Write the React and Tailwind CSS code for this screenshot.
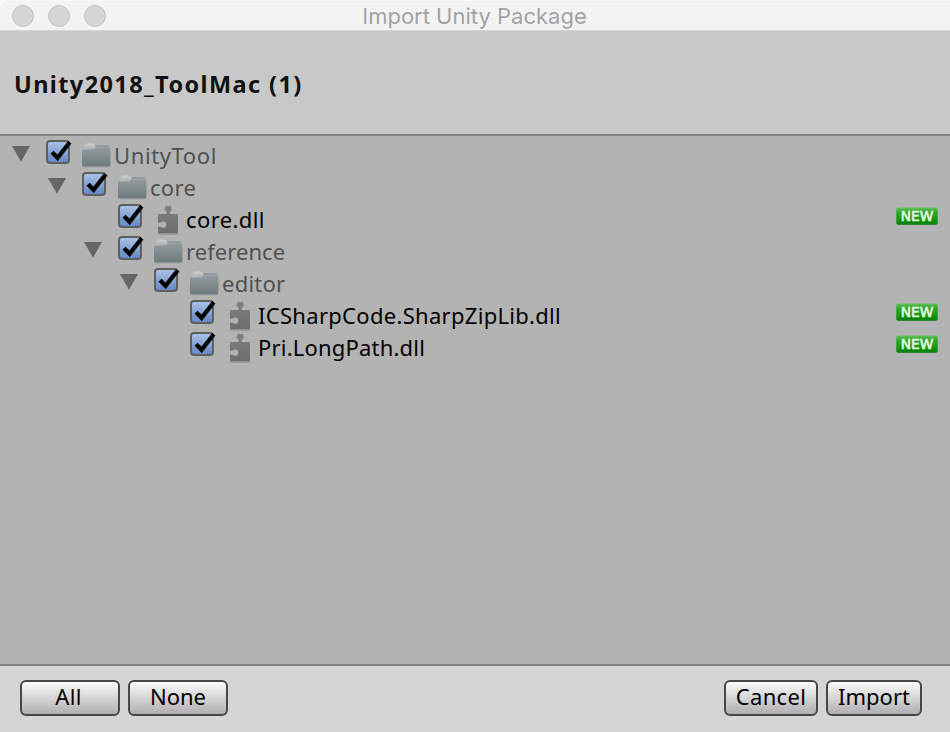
const rows = [
  { name: "UnityTool", indent: "pl-3", kind: "folder", text: "tracking-[0.6px]" },
  { name: "core", indent: "pl-12", kind: "folder", text: "tracking-[0.3px]" },
  { name: "core.dll", indent: "pl-[120px]", kind: "plugin", text: "tracking-[0.4px]" },
  { name: "reference", indent: "pl-[84px]", kind: "folder", text: "tracking-[0.05px]" },
  { name: "editor", indent: "pl-[120px]", kind: "folder", text: "tracking-[0.25px]" },
  { name: "ICSharpCode.SharpZipLib.dll", indent: "pl-48", kind: "plugin", text: "tracking-[0.3px]" },
  { name: "Pri.LongPath.dll", indent: "pl-48", kind: "plugin", text: "tracking-[0.2px]" },
];

function Triangle() {
  return (
    <svg className="block" width="18" height="16" viewBox="0 0 18 16">
      <path d="M0 0H18L9 15.7Z" fill="#666" />
    </svg>
  );
}

function Checkbox() {
  return (
    <svg className="block shrink-0" width="28" height="28" viewBox="0 0 28 28">
      <defs>
        <linearGradient id="checkFill" x1="0" y1="0" x2="0" y2="1">
          <stop offset="0" stopColor="#abc4e6" />
          <stop offset="1" stopColor="#6184c2" />
        </linearGradient>
      </defs>
      <rect x="1" y="1" width="22" height="22" rx="3" fill="url(#checkFill)" stroke="#5f5f5f" strokeWidth="2" />
      <path d="M6 12.200L11.600 17.800L23.800 2.200" fill="none" stroke="#000" strokeWidth="4.200" />
    </svg>
  );
}

function Folder() {
  return (
    <svg className="block" width="30" height="26" viewBox="0.6 0.6 30 26">
      <defs>
        <linearGradient id="folderFill" x1="0" y1="0" x2="0" y2="1">
          <stop offset="0" stopColor="#919b9d" />
          <stop offset="1" stopColor="#6f7a7d" />
        </linearGradient>
        <linearGradient id="tabFill" gradientUnits="userSpaceOnUse" x1="0" y1="1" x2="0" y2="8">
          <stop offset="0" stopColor="#cbcbcb" />
          <stop offset="1" stopColor="#a9acac" />
        </linearGradient>
      </defs>
      <path d="M14 2.600H26.800Q27.800 2.600 27.900 3.600L28.200 8H13Z" fill="#8f999b" />
      <path d="M13.800 2.800H27" stroke="#a0a6a7" strokeWidth="0.600" />
      <path d="M0.800 9V6.500Q0.800 5 2 4L4 2Q4.800 1.200 5.800 1.200H11.300Q12.300 1.200 12.900 2L14.200 4V8Z" fill="url(#tabFill)" />
      <path d="M0.600 8.200Q0.600 7 1.700 7H11Q12 7 12.800 6.200Q14 5 15 5H27.700Q29 5 29 6.500V22.700Q29 24.200 27.500 24.200H2.100Q0.600 24.200 0.600 22.700Z" fill="url(#folderFill)" />
      <path d="M1 7H11Q12 7 12.800 6.200Q14 5 15 5H28.300" fill="none" stroke="#a4adae" strokeWidth="0.700" />
      <path d="M1.500 24.700H28" stroke="#959999" strokeWidth="0.800" />
    </svg>
  );
}

function Plugin() {
  return (
    <svg className="block" width="22" height="30" viewBox="0 0 22 30">
      <defs>
        <linearGradient id="pluginFill" x1="0" y1="0" x2="0" y2="1">
          <stop offset="0" stopColor="#808080" />
          <stop offset="1" stopColor="#6d6d6d" />
        </linearGradient>
      </defs>
      <path d="M0 27.500V20.500H2.200C3.200 20.500 3.600 21.700 5.200 21.700A3.100 3.100 0 0 0 5.200 15.500C3.600 15.500 3.200 16.700 2.200 16.700H0V8H7.500C9 8 9.300 7 8.300 5.800A3.500 3.500 0 1 1 12 5.800C11 7 11.300 8 12.800 8H20V27.500Z" fill="url(#pluginFill)" />
      <path d="M0 28.200H20" stroke="#969696" strokeWidth="1" />
    </svg>
  );
}

function NewBadge() {
  return (
    <svg className="block" width="42" height="18" viewBox="0 0 42 18">
      <defs>
        <linearGradient id="newFill" x1="0" y1="0" x2="0" y2="1">
          <stop offset="0" stopColor="#63c45e" />
          <stop offset="0.250" stopColor="#35a52f" />
          <stop offset="0.850" stopColor="#118c0d" />
          <stop offset="1" stopColor="#0b720a" />
        </linearGradient>
      </defs>
      <rect x="0.300" y="0.500" width="41.400" height="17.200" rx="2" fill="url(#newFill)" />
      <text x="4.800" y="13.900" textLength="32.500" lengthAdjust="spacingAndGlyphs" fill="#dcf5da" stroke="#dcf5da" strokeWidth="0.700" fontSize="13.500" fontFamily="'DejaVu Sans', sans-serif">NEW</text>
    </svg>
  );
}

function Row({ row }) {
  const folder = row.kind === "folder";
  return (
    <div className={`flex h-8 items-start pr-3 ${row.indent}`}>
      {folder && (
        <div className="mr-4 w-[18px] shrink-0 pt-1.5">
          <Triangle />
        </div>
      )}
      <div className={folder ? "w-9 shrink-0" : "-ml-0.5 w-10 shrink-0"}>
        <Checkbox />
      </div>
      <div className={folder ? "w-8 shrink-0 pt-[3px]" : "w-7 shrink-0 pt-0.5"}>
        {folder ? <Folder /> : <Plugin />}
      </div>
      <span className={`grow whitespace-nowrap text-[22px] leading-[30px] ${row.text} ${folder ? "text-[#515151]" : "text-black"}`}>
        {row.name}
      </span>
      {!folder && (
        <div className="shrink-0 pt-[3px]">
          <NewBadge />
        </div>
      )}
    </div>
  );
}

function Button({ children, className }) {
  return (
    <button
      className={`flex h-9 items-center justify-center rounded-[6px] border-2 border-[#474747] bg-linear-to-b from-[#fcfcfc] to-[#b1aeb1] pb-1 text-[22px] leading-7 text-black ${className}`}
    >
      {children}
    </button>
  );
}

export default function App() {
  return (
    <div className="flex h-[732px] w-[950px] flex-col overflow-hidden bg-[#b3b3b3] font-['Noto_Sans',sans-serif]">
      <div className="shrink-0 bg-white">
        <header className="grid h-[31px] grid-cols-[1fr_auto_1fr] items-center rounded-tl-[8px] border-b border-[#d5d5d5] bg-[#f3f3f3] shadow-[inset_0_1px_0_#fafafa]">
          <div className="flex gap-3.5 pl-3 pt-0.5">
            <span className="size-[22px] rounded-full border border-[#c4c4c4] bg-[#d6d6d6]" />
            <span className="size-[22px] rounded-full border border-[#c4c4c4] bg-[#d6d6d6]" />
            <span className="size-[22px] rounded-full border border-[#c4c4c4] bg-[#d6d6d6]" />
          </div>
          <h1 className="pr-px pt-0.5 font-['Inter',sans-serif] text-[22px] leading-7 text-[#a3a3a3]">Import Unity Package</h1>
        </header>
      </div>
      <section className="flex h-[105px] shrink-0 items-center border-b-2 border-[#818181] bg-[#c8c8c8] pl-3.5 pt-0.5">
        <h2 className="text-[23.5px] font-bold leading-8 tracking-[1.4px] text-[#111]">Unity2018_ToolMac (1)</h2>
      </section>
      <main className="grow pt-1">
        {rows.map((row) => (
          <Row key={row.name} row={row} />
        ))}
      </main>
      <footer className="flex h-[68px] shrink-0 items-start gap-2 border-t-2 border-[#818181] bg-[#d5d5d5] pl-5 pr-7 pt-3.5">
        <Button className="w-[100px] pr-[3px] tracking-[0.4px]">All</Button>
        <Button className="w-[100px]">None</Button>
        <Button className="ml-auto w-[94px] tracking-[0.3px]">Cancel</Button>
        <Button className="w-24">Import</Button>
      </footer>
    </div>
  );
}
